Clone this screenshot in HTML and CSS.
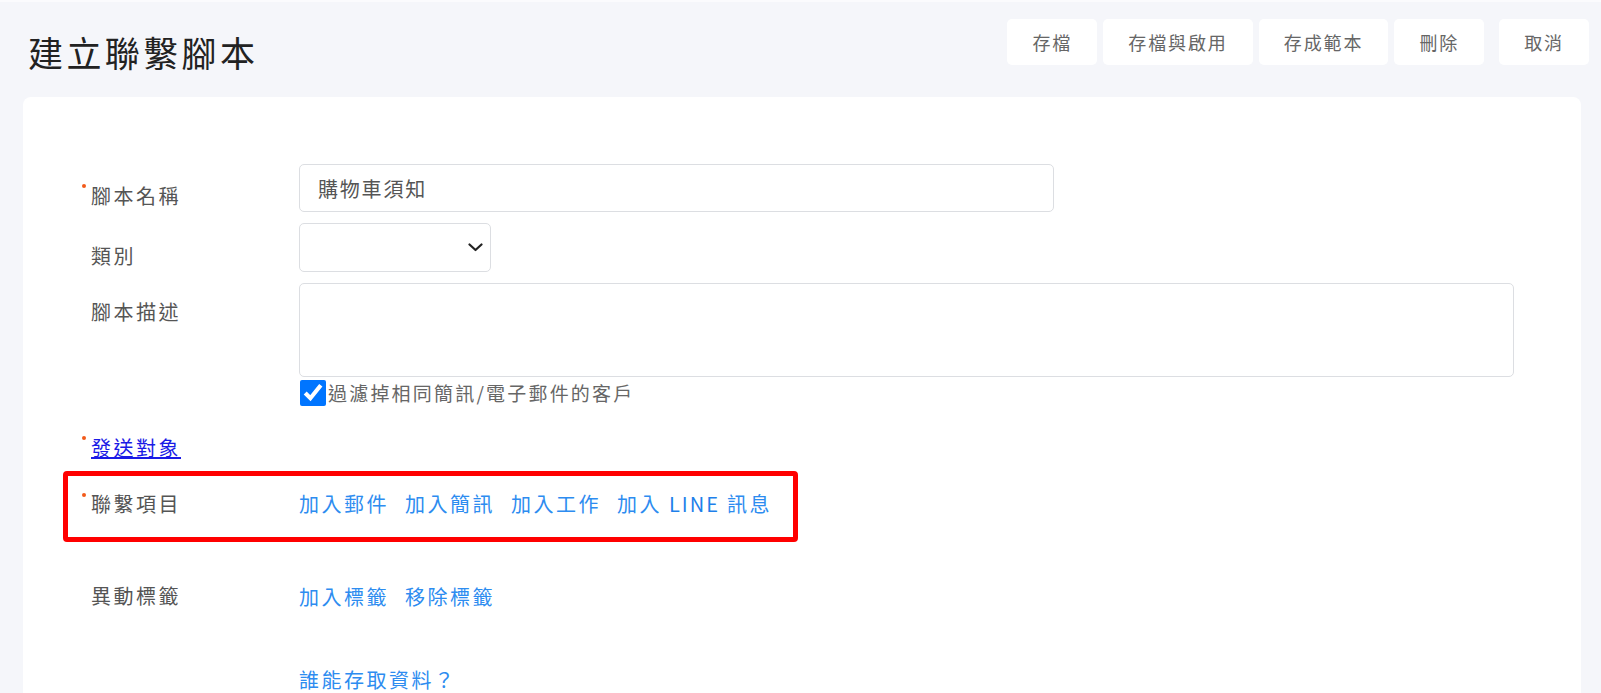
FILE: index.html
```html
<!DOCTYPE html>
<html lang="zh-Hant">
<head>
  <meta charset="UTF-8">
  <title>建立聯繫腳本</title>
  <link rel="stylesheet" href="styles.css">
</head>
<body>

<header class="page-head">
  <h1 class="page-title">建立聯繫腳本</h1>
  <div class="actions">
    <button class="btn">存檔</button>
    <button class="btn">存檔與啟用</button>
    <button class="btn">存成範本</button>
    <button class="btn">刪除</button>
    <button class="btn btn-cancel">取消</button>
  </div>
</header>

<main class="card">
  <form class="script-form" onsubmit="return false;">
    <div class="row row-name">
      <label class="label req">腳本名稱</label>
      <input class="text-input" type="text" value="購物車須知">
    </div>

    <div class="row row-cat">
      <label class="label">類別</label>
      <div class="select-wrap">
        <select class="select"><option></option></select>
        <svg class="chevron" width="15" height="9" viewBox="0 0 15 9"><path d="M1.5 1.5 L7.5 7 L13.5 1.5" fill="none" stroke="#222" stroke-width="2.2" stroke-linecap="round" stroke-linejoin="round"/></svg>
      </div>
    </div>

    <div class="row row-desc">
      <label class="label label-desc">腳本描述</label>
      <div class="field">
        <textarea class="textarea"></textarea>
        <label class="check"><input type="checkbox" checked>過濾掉相同簡訊/電子郵件的客戶</label>
      </div>
    </div>

    <div class="row row-target">
      <span class="label req"><a href="#" class="plain-link">發送對象</a></span>
    </div>

    <div class="row highlight">
      <span class="label req">聯繫項目</span>
      <div class="links">
        <a class="act">加入郵件</a>
        <a class="act">加入簡訊</a>
        <a class="act">加入工作</a>
        <a class="act">加入 <span class="latin">LINE</span> 訊息</a>
      </div>
    </div>

    <div class="row row-tags">
      <span class="label">異動標籤</span>
      <div class="links">
        <a class="act">加入標籤</a>
        <a class="act">移除標籤</a>
      </div>
    </div>

    <div class="row row-access">
      <span class="label"></span>
      <div class="links">
        <a class="act">誰能存取資料？</a>
      </div>
    </div>
  </form>
</main>

</body>
</html>
```

FILE: styles.css
```css
body { margin: 0; font-family: "Noto Sans CJK TC", "Noto Sans", sans-serif; background: #f5f6fa; color: #555; border-top: 2px solid #fbfbfd; }

.page-head { display: flex; justify-content: space-between; align-items: flex-start; height: 95px; padding: 17px 12px 0 28px; box-sizing: border-box; }
.page-title { margin: 12px 0 0; font-size: 35px; line-height: 42px; font-weight: 400; color: #222; letter-spacing: 3.4px; }
.actions { display: flex; gap: 6px; }
.btn { height: 46px; padding: 0 25px; border: none; border-radius: 5px; background: #fff; color: #666; font-family: inherit; font-size: 18px; letter-spacing: 1.9px; cursor: pointer; }
.btn-cancel { margin-left: 9px; }

.card { background: #fff; margin: 0 20px 0 23px; border-radius: 8px 8px 0 0; padding: 67px 67px 60px 68px; min-height: 600px; }

.row { display: grid; grid-template-columns: 208px 1215px; align-items: start; }
.label { position: relative; font-size: 20px; line-height: 24px; letter-spacing: 2.5px; color: #555; padding-top: 20px; }
.req::before { content: ""; position: absolute; left: -9px; top: 20px; width: 4px; height: 4px; border-radius: 50%; background: #f25a1a; }

.text-input { width: 755px; height: 48px; box-sizing: border-box; border: 1px solid #dcdee2; border-radius: 5px; padding: 0 18px; font-family: inherit; font-size: 20px; letter-spacing: 1.8px; color: #555; outline: none; }

.row-cat { margin-top: 11px; }
.row-cat .label { padding-top: 21px; }
.select-wrap { position: relative; width: 192px; }
.select { width: 192px; height: 49px; border: 1px solid #dcdee2; border-radius: 5px; background: #fff; appearance: none; -webkit-appearance: none; font-family: inherit; font-size: 18px; }
.chevron { position: absolute; right: 8px; top: 20px; pointer-events: none; }

.row-desc { margin-top: 11px; }
.label-desc { padding-top: 17px; }
.textarea { display: block; width: 1215px; height: 94px; box-sizing: border-box; border: 1px solid #dcdee2; border-radius: 5px; resize: none; padding: 10px 18px; font-family: inherit; font-size: 19px; }
.check { display: flex; align-items: center; margin-top: 3px; font-size: 19px; line-height: 26px; letter-spacing: 2.2px; color: #666; }
.check input { width: 26px; height: 26px; margin: 0 2px 0 1px; }

.row-target { margin-top: 30px; }
.row-target .label { padding-top: 0; }
.row-target .req::before { top: 0; }
.plain-link { color: #1a1ae6; text-decoration: underline; }

.highlight { grid-template-columns: 208px auto; width: fit-content; margin: 11px 0 0 -28px; padding: 16px 21px 21px 23px; border: 5px solid #ff0000; border-radius: 4px; }
.highlight .label { padding-top: 0; }
.highlight .req::before { top: 1px; }

.links { display: flex; gap: 16px; font-size: 20px; line-height: 24px; letter-spacing: 2.5px; }
.act { color: #2d8cf0; text-decoration: none; cursor: pointer; }
.latin { color: #1e80ea; letter-spacing: 2px; }

.row-tags { margin-top: 42px; }
.row-tags .label { padding-top: 0; }
.row-tags .links { padding-top: 1px; }
.row-access { margin-top: 59px; }
.row-access .label { padding-top: 0; }
```
